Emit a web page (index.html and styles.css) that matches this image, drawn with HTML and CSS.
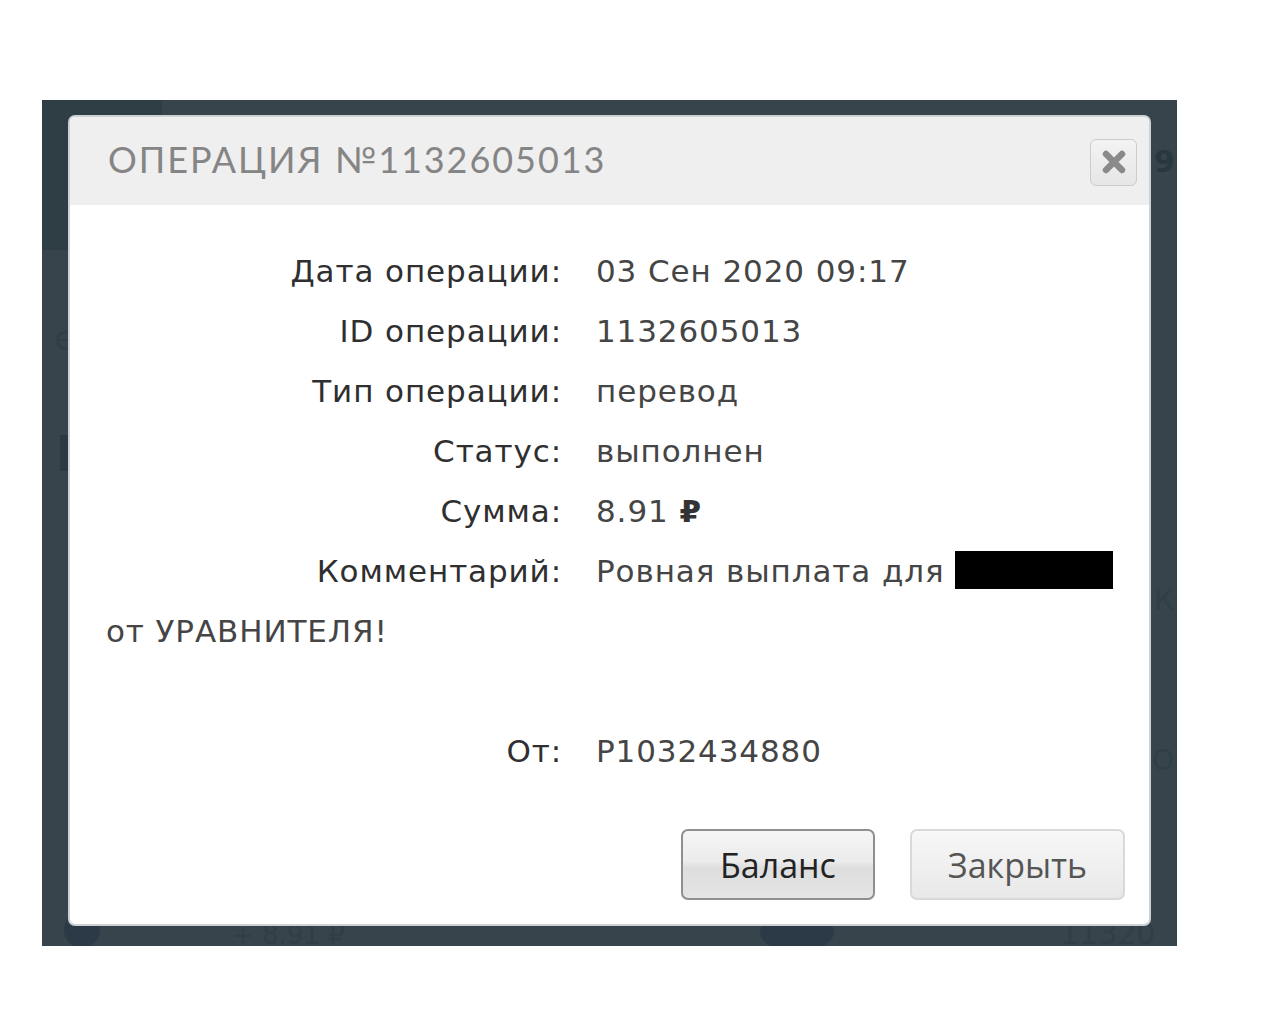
FILE: index.html
```html
<!DOCTYPE html>
<html lang="ru">
<head>
<meta charset="utf-8">
<title>Операция №1132605013</title>
<link rel="stylesheet" href="styles.css">
</head>
<body>
<div class="page">
  <div class="backdrop">
    <div class="ghost ghost-col"></div>
    <div class="ghost ghost-e">е</div>
    <div class="ghost ghost-bar"></div>
    <div class="ghost ghost-nine">9</div>
    <div class="ghost ghost-k">К</div>
    <div class="ghost ghost-o">О</div>
    <div class="ghost ghost-dot1"></div>
    <div class="ghost ghost-sum">+ 8.91 ₽</div>
    <div class="ghost ghost-dot2"></div>
    <div class="ghost ghost-id">11320</div>

    <div class="modal">
      <div class="modal-header">
        <h1 class="modal-title">Операция №1132605013</h1>
        <button class="close-btn" type="button" aria-label="Закрыть">
          <svg width="24" height="24" viewBox="0 0 24 24"><path d="M4 4 L20 20 M20 4 L4 20" stroke="#8a8a8a" stroke-width="6.5" stroke-linecap="round" fill="none"/></svg>
        </button>
      </div>
      <div class="modal-body">
        <div class="details">
          <div class="label">Дата операции:</div>
          <div class="value">03 Сен 2020 09:17</div>
          <div class="label">ID операции:</div>
          <div class="value">1132605013</div>
          <div class="label">Тип операции:</div>
          <div class="value">перевод</div>
          <div class="label">Статус:</div>
          <div class="value">выполнен</div>
          <div class="label">Сумма:</div>
          <div class="value">8.91 <span class="rub">₽</span></div>
          <div class="label">Комментарий:</div>
          <div class="value">Ровная выплата для <span class="redact"></span></div>
          <div class="wrap-line">от УРАВНИТЕЛЯ!</div>
          <div class="spacer"></div>
          <div class="label">От:</div>
          <div class="value">P1032434880</div>
        </div>
        <div class="actions">
          <button class="btn btn-primary" type="button">Баланс</button>
          <button class="btn btn-light" type="button">Закрыть</button>
        </div>
      </div>
    </div>
  </div>
</div>
</body>
</html>
```

FILE: styles.css
```css
* { box-sizing: border-box; }

html, body {
  margin: 0;
  padding: 0;
  background: #ffffff;
}

.page {
  padding: 100px 0 0 42px;
}

.backdrop {
  position: relative;
  width: 1135px;
  height: 846px;
  background: #37444c;
  padding: 15px 26px 20px 26px;
}

.ghost {
  position: absolute;
  z-index: 0;
  color: #313e46;
  font-family: "DejaVu Sans", sans-serif;
}

.ghost-col {
  left: 0;
  top: 0;
  width: 120px;
  height: 150px;
  background: #2f3d45;
}

.ghost-e {
  left: 12px;
  top: 218px;
  font-size: 34px;
}

.ghost-bar {
  left: 18px;
  top: 335px;
  width: 10px;
  height: 36px;
  background: #2d3a42;
}

.ghost-nine {
  left: 1112px;
  top: 44px;
  font-size: 30px;
  font-weight: bold;
  color: #2b373f;
}

.ghost-k {
  left: 1112px;
  top: 484px;
  font-size: 28px;
}

.ghost-o {
  left: 1110px;
  top: 644px;
  font-size: 28px;
}

.ghost-dot1 {
  left: 22px;
  top: 812px;
  width: 36px;
  height: 36px;
  border-radius: 50%;
  background: #2c3a47;
}

.ghost-sum {
  left: 190px;
  top: 820px;
  font-size: 26px;
}

.ghost-dot2 {
  left: 718px;
  top: 812px;
  width: 74px;
  height: 40px;
  border-radius: 50%;
  background: #2c3a47;
}

.ghost-id {
  left: 1018px;
  top: 816px;
  font-size: 30px;
}

.modal {
  position: relative;
  z-index: 1;
  width: 1083px;
  height: 811px;
  background: #ffffff;
  border: 2px solid #cdd1d3;
  border-radius: 7px;
  overflow: hidden;
  display: flex;
  flex-direction: column;
}

.modal-header {
  height: 88px;
  background: #efefef;
  display: flex;
  align-items: center;
  justify-content: space-between;
  padding: 0 12px 0 38px;
}

.modal-title {
  margin: 0 0 4px 0;
  font-family: Lato, "Liberation Sans", sans-serif;
  font-weight: normal;
  font-size: 36px;
  letter-spacing: 1.95px;
  text-transform: uppercase;
  color: #858585;
}

.close-btn {
  width: 47px;
  height: 47px;
  margin-top: 2px;
  border: 1px solid #cccccc;
  border-radius: 6px;
  background: linear-gradient(#f3f3f3, #e6e6e6);
  display: flex;
  align-items: center;
  justify-content: center;
  padding: 0;
}

.modal-body {
  flex: 1;
  padding: 36px 24px 0 36px;
  display: flex;
  flex-direction: column;
}

.details {
  display: grid;
  grid-template-columns: 456px 1fr;
  column-gap: 34px;
  font-family: "DejaVu Sans", sans-serif;
  font-size: 31px;
  line-height: 60px;
  letter-spacing: 0.9px;
}

.label {
  text-align: right;
  color: #2f2f2f;
  white-space: nowrap;
}

.value {
  color: #454545;
  white-space: nowrap;
}

.rub {
  font-weight: bold;
  color: #333333;
}

.redact {
  display: inline-block;
  width: 158px;
  height: 38px;
  background: #000000;
  vertical-align: -7px;
  margin-left: 0;
}

.wrap-line {
  grid-column: 1 / -1;
  color: #454545;
}

.spacer {
  grid-column: 1 / -1;
  height: 60px;
}

.actions {
  display: flex;
  justify-content: flex-end;
  gap: 35px;
  margin-top: 48px;
}

.btn {
  height: 71px;
  border-radius: 7px;
  font-family: "Open Sans", "Liberation Sans", sans-serif;
  font-size: 34px;
  padding: 0;
}

.btn-primary {
  width: 194px;
  border: 2px solid #8f8f8f;
  background: linear-gradient(#f5f5f5 0%, #ececec 45%, #dedede 55%, #e4e4e4 100%);
  color: #222222;
}

.btn-light {
  width: 215px;
  border: 2px solid #d9d9d9;
  background: linear-gradient(#f7f7f7 0%, #f0f0f0 50%, #e8e8e8 100%);
  color: #555555;
}
```
